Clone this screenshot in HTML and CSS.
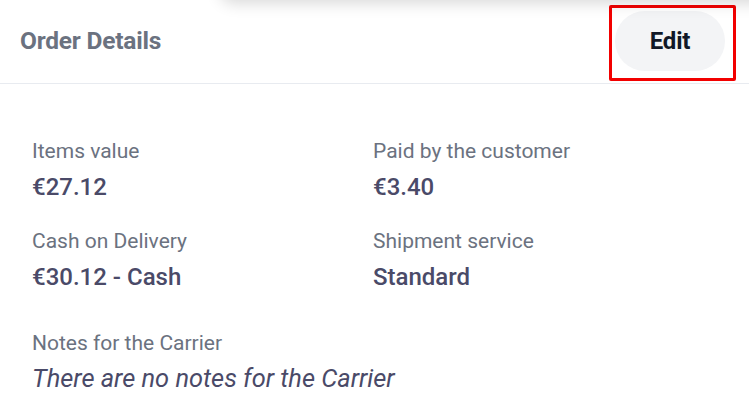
FILE: index.html
```html
<!DOCTYPE html>
<html lang="en">
<head>
<meta charset="utf-8">
<title>Order Details</title>
<link rel="stylesheet" href="styles.css">
</head>
<body>
<div class="page">
  <div class="card-above"></div>
  <header class="header">
    <h2 class="title">Order Details</h2>
    <div class="highlight">
      <button class="edit-btn">Edit</button>
    </div>
  </header>
  <section class="details">
    <div class="grid">
      <div class="field">
        <div class="label">Items value</div>
        <div class="value">€27.12</div>
      </div>
      <div class="field">
        <div class="label">Paid by the customer</div>
        <div class="value">€3.40</div>
      </div>
      <div class="field">
        <div class="label">Cash on Delivery</div>
        <div class="value">€30.12 - Cash</div>
      </div>
      <div class="field">
        <div class="label">Shipment service</div>
        <div class="value">Standard</div>
      </div>
    </div>
    <div class="field notes">
      <div class="label">Notes for the Carrier</div>
      <div class="value italic">There are no notes for the Carrier</div>
    </div>
  </section>
</div>
</body>
</html>
```
FILE: styles.css
```css
* { box-sizing: border-box; }
html, body {
  margin: 0;
  padding: 0;
  background: #ffffff;
  font-family: Roboto, "Noto Sans", Arial, sans-serif;
  overflow: hidden;
}
.page {
  position: relative;
  width: 749px;
  height: 420px;
}
.card-above {
  position: absolute;
  top: -30px;
  left: 220px;
  right: -20px;
  height: 30px;
  border-radius: 14px;
  background: #fff;
  box-shadow: 0 3px 16px rgba(0, 0, 0, 0.16);
}
.header {
  display: flex;
  align-items: center;
  justify-content: space-between;
  height: 84px;
  padding: 0 13px 3px 20px;
  border-bottom: 1px solid #e8ebf0;
}
.title {
  margin: 0;
  font-size: 24.5px;
  font-weight: 700;
  color: #6b7280;
  letter-spacing: -0.2px;
}
.highlight {
  align-self: flex-start;
  margin-top: 5px;
  border: 3px solid #f20000;
  border-radius: 2px;
  padding: 3px 8px 7px 3px;
}
.edit-btn {
  display: block;
  width: 110px;
  height: 60px;
  border: none;
  border-radius: 30px;
  background: #f3f4f6;
  font-family: inherit;
  font-size: 24px;
  font-weight: 700;
  color: #111827;
  letter-spacing: -0.2px;
}
.details {
  padding: 54px 32px 0 32px;
}
.grid {
  display: grid;
  grid-template-columns: 341px 1fr;
  row-gap: 26px;
}
.field {
  display: flex;
  flex-direction: column;
  gap: 8px;
}
.label {
  font-size: 21px;
  line-height: 26px;
  color: #6b7280;
}
.value {
  font-size: 24px;
  line-height: 30px;
  font-weight: 500;
  color: #4a4a68;
}
.notes {
  margin-top: 38px;
  gap: 7px;
}
.value.italic {
  font-style: italic;
  font-weight: 400;
  font-size: 25.4px;
}
```
